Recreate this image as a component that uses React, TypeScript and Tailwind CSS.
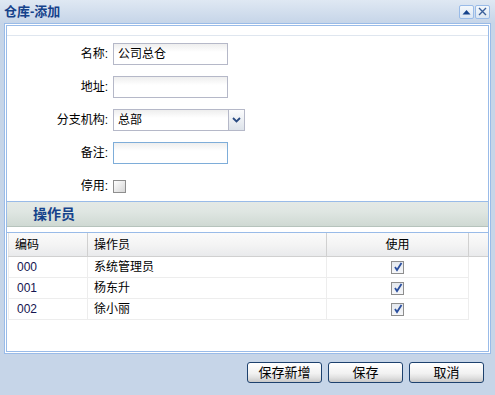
import React from "react";

function TitleBtn({ kind }: { kind: "up" | "x" }) {
  return (
    <div className="w-[15px] h-[14px] border border-[#99bbe8] rounded-[2px] bg-[linear-gradient(#f4f8fc,#dbe6f3)] flex items-center justify-center">
      {kind === "up" ? (
        <svg width="9" height="6" viewBox="0 0 9 6">
          <path d="M0.5 5.5 L4.5 1 L8.5 5.5 Z" fill="#15428b" />
        </svg>
      ) : (
        <svg width="9" height="9" viewBox="0 0 9 9">
          <path d="M1 1 L8 8 M8 1 L1 8" stroke="#3a5f9a" strokeWidth="1.4" />
        </svg>
      )}
    </div>
  );
}

function Field({ label, children }: { label: string; children: React.ReactNode }) {
  return (
    <div className="flex items-center h-[22px]">
      <div className="w-[101px] text-right leading-none">{label}:</div>
      <div className="ml-[5px]">{children}</div>
    </div>
  );
}

function TextInput({ value, focus }: { value?: string; focus?: boolean }) {
  return (
    <div
      className={`w-[115px] h-[22px] border ${
        focus ? "border-[#7eadd9]" : "border-[#b5b8c8]"
      } bg-[linear-gradient(#eeeeee,#ffffff_40%)] flex items-center pl-[4px] leading-none`}
    >
      {value}
    </div>
  );
}

function GridCheck() {
  return (
    <div className="w-[13px] h-[13px] border border-[#8e8e8e] bg-[linear-gradient(#e4e8ee,#f6f7f9)] flex items-center justify-center">
      <svg width="10" height="10" viewBox="0 0 10 10">
        <path d="M2 5 L4 8 L8.5 1" fill="none" stroke="#2b4f9e" strokeWidth="1.8" />
      </svg>
    </div>
  );
}

function Btn({ children }: { children: React.ReactNode }) {
  return (
    <div className="w-[75px] h-[21px] border border-[#1d416e] rounded-[3px] bg-[linear-gradient(#ffffff,#f1f1f1_55%,#e2e2e2_75%,#c9c9c9)] flex items-center justify-center text-[13px] leading-none">
      {children}
    </div>
  );
}

const rows = [
  { code: "000", name: "系统管理员" },
  { code: "001", name: "杨东升" },
  { code: "002", name: "徐小丽" },
];

export default function App() {
  return (
    <div className="w-[495px] h-[395px] bg-[#c6d5e8] flex flex-col overflow-hidden text-[12px] text-black font-['Liberation_Sans','Noto_Sans_CJK_SC',sans-serif]">
      <div className="h-[23px] flex items-center justify-between pl-[4px] pr-[5px] bg-[linear-gradient(#dfe8f3,#c6d5e8)]">
        <span className="text-[13px] font-bold text-[#15428b] leading-none">仓库-添加</span>
        <div className="flex gap-[1px]">
          <TitleBtn kind="up" />
          <TitleBtn kind="x" />
        </div>
      </div>

      <div className="mx-[4px] h-[331px] border border-[#99bbe8] bg-white p-[1px]">
        <div className="h-full border border-[#99bbe8] flex flex-col">
          <div className="h-[10px] border-b border-[#dfe6ef] shrink-0" />

          <div className="flex flex-col gap-[11px] pt-[7px] pb-[4px]">
            <Field label="名称">
              <TextInput value="公司总仓" />
            </Field>
            <Field label="地址">
              <TextInput />
            </Field>
            <Field label="分支机构">
              <div className="w-[132px] h-[22px] flex">
                <div className="flex-1 border border-[#b5b8c8] border-r-0 bg-[linear-gradient(#eeeeee,#ffffff_40%)] flex items-center pl-[4px] leading-none">
                  总部
                </div>
                <div className="w-[17px] h-full border border-[#b5b8c8] bg-[linear-gradient(#fbfcfd,#dde3ea)] flex items-center justify-center">
                  <svg width="9" height="6" viewBox="0 0 9 6">
                    <path d="M1 1 L4.5 4.5 L8 1" fill="none" stroke="#2a4b82" strokeWidth="1.8" />
                  </svg>
                </div>
              </div>
            </Field>
            <Field label="备注">
              <TextInput focus />
            </Field>
            <Field label="停用">
              <div className="w-[13px] h-[13px] border border-[#8e8e8e] bg-[linear-gradient(135deg,#ffffff,#d6d6d6)]" />
            </Field>
          </div>

          <div className="h-[26px] shrink-0 border-t border-[#99bbe8] border-b border-b-[#b6c3bc] bg-[linear-gradient(#e4e9e6,#dfe6e2_40%,#cfd9d3)] flex items-center pl-[26px]">
            <span className="text-[14px] font-bold text-[#15428b] leading-none">操作员</span>
          </div>

          <div className="h-[5px] shrink-0" />

          <div className="flex-1 border-t border-[#99bbe8] pl-[1px]">
            <div className="flex h-[24px] border-b border-[#d0d0d0] bg-[linear-gradient(#fafafa,#f4f4f4_50%,#e9eaec)]">
              <div className="w-[80px] border-l border-[#e3e3e3] border-r border-r-[#d0d0d0] flex items-center pl-[6px] leading-none">编码</div>
              <div className="w-[239px] border-r border-[#d0d0d0] flex items-center pl-[6px] leading-none">操作员</div>
              <div className="w-[142px] border-r border-[#d0d0d0] flex items-center justify-center leading-none">使用</div>
              <div className="flex-1" />
            </div>
            {rows.map((r) => (
              <div key={r.code} className="flex w-[461px] h-[21px] border-b border-[#ededed]">
                <div className="w-[80px] border-l border-[#ededed] border-r border-r-[#ededed] flex items-center pl-[8px] leading-none text-[#141450]">
                  {r.code}
                </div>
                <div className="w-[239px] border-r border-[#ededed] flex items-center pl-[6px] leading-none">{r.name}</div>
                <div className="w-[142px] border-r border-[#ededed] flex items-center justify-center">
                  <GridCheck />
                </div>
              </div>
            ))}
          </div>
        </div>
      </div>

      <div className="flex justify-end gap-[6px] pr-[11px] pt-[8px]">
        <Btn>保存新增</Btn>
        <Btn>保存</Btn>
        <Btn>取消</Btn>
      </div>
    </div>
  );
}
